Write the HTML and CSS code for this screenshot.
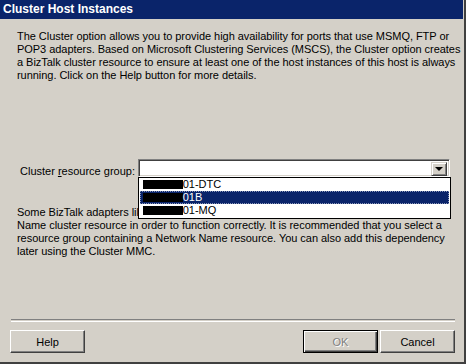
FILE: index.html
```html
<!DOCTYPE html>
<html>
<head>
    <title>Cluster Host Instances</title>
    <link rel="stylesheet" href="styles.css">
</head>
<body>
    <div class="dialog">
        <div class="titlebar">Cluster Host Instances</div>
        <div class="content">
            <p class="intro">
                The Cluster option allows you to provide high availability for ports that use MSMQ, FTP or<br>
                POP3 adapters. Based on Microsoft Clustering Services (MSCS), the Cluster option creates<br>
                a BizTalk cluster resource to ensure at least one of the host instances of this host is always<br>
                running. Click on the Help button for more details.
            </p>
            <div class="group-row">
                <label class="group-label">Cluster <u>r</u>esource group:</label>
                <div class="combo">
                    <div class="combo-button"><span class="arrow"></span></div>
                    <ul class="dropdown">
                        <li><span class="redacted"></span>01-DTC</li>
                        <li class="selected"><span class="redacted"></span>01B</li>
                        <li><span class="redacted"></span>01-MQ</li>
                    </ul>
                </div>
            </div>
            <p class="note">
                Some BizTalk adapters like POP3 require an IP Address and a Network<br>
                Name cluster resource in order to function correctly. It is recommended that you select a<br>
                resource group containing a Network Name resource. You can also add this dependency<br>
                later using the Cluster MMC.
            </p>
        </div>
        <div class="footer">
            <div class="separator"></div>
            <div class="buttons">
                <button class="btn">Help</button>
                <div class="right-buttons">
                    <button class="btn default" disabled>OK</button>
                    <button class="btn">Cancel</button>
                </div>
            </div>
        </div>
    </div>
</body>
</html>
```

FILE: styles.css
```css
body {
    margin: 0;
    background-color: #d4d0c8;
    font-family: 'Liberation Sans', Arial, sans-serif;
    font-size: 11px;
    color: #000;
}

.dialog {
    width: 466px;
    height: 364px;
    box-sizing: border-box;
    background-color: #d4d0c8;
    border-right: 2px solid #404040;
    border-bottom: 2px solid #404040;
    display: flex;
    flex-direction: column;
}

.titlebar {
    height: 19px;
    background-color: #0a246a;
    color: #fff;
    font-weight: bold;
    font-size: 12px;
    line-height: 19px;
    padding-left: 3px;
    margin-right: 1px;
}

.content {
    padding: 11px 14px 0 17px;
}

.intro, .note {
    margin: 0;
    line-height: 13px;
    letter-spacing: -0.04px;
    white-space: nowrap;
}

.group-row {
    display: flex;
    align-items: center;
    margin-top: 77px;
    padding-left: 3px;
}

.group-label {
    width: 118px;
    padding-top: 5px;
}

.combo {
    position: relative;
    width: 313px;
    height: 18px;
    box-sizing: border-box;
    background-color: #fff;
    border-top: 1px solid #808080;
    border-left: 1px solid #808080;
    border-right: 1px solid #fff;
    border-bottom: 1px solid #fff;
    box-shadow: inset 1px 1px #404040, inset -1px -1px #d4d0c8;
    display: flex;
    justify-content: flex-end;
    padding: 2px;
}

.combo-button {
    width: 16px;
    height: 14px;
    box-sizing: border-box;
    background-color: #d4d0c8;
    border-top: 1px solid #d4d0c8;
    border-left: 1px solid #d4d0c8;
    border-right: 1px solid #404040;
    border-bottom: 1px solid #404040;
    box-shadow: inset 1px 1px #fff, inset -1px -1px #808080;
    display: flex;
    align-items: center;
    justify-content: center;
}

.arrow {
    width: 0;
    height: 0;
    border-left: 4px solid transparent;
    border-right: 4px solid transparent;
    border-top: 4px solid #000;
}

.dropdown {
    position: absolute;
    top: 17px;
    left: -1px;
    width: 313px;
    box-sizing: border-box;
    margin: 0;
    padding: 0 1px 1px 1px;
    list-style: none;
    background-color: #fff;
    border: 1px solid #000;
}

.dropdown li {
    height: 13px;
    line-height: 13px;
    display: flex;
    align-items: center;
    padding-left: 3px;
}

.dropdown li.selected {
    background-color: #0a246a;
    color: #fff;
    outline: 1px dotted #8a96b8;
    outline-offset: -1px;
}

.redacted {
    display: inline-block;
    width: 40px;
    height: 9px;
    background-color: #000;
}

.note {
    margin-top: 29px;
}

.footer {
    margin-top: auto;
    padding: 0 9px 9px 10px;
}

.separator {
    height: 1px;
    margin-left: 1px;
    border-top: 1px solid #808080;
    border-bottom: 1px solid #fff;
}

.buttons {
    display: flex;
    justify-content: space-between;
    margin-top: 8px;
}

.right-buttons {
    display: flex;
    gap: 2px;
}

.btn {
    width: 75px;
    height: 23px;
    box-sizing: border-box;
    background-color: #d4d0c8;
    font-family: 'Liberation Sans', Arial, sans-serif;
    font-size: 11px;
    color: #000;
    border-top: 1px solid #fff;
    border-left: 1px solid #fff;
    border-right: 1px solid #404040;
    border-bottom: 1px solid #404040;
    box-shadow: inset -1px -1px #808080, inset 1px 1px #d4d0c8;
    padding: 0;
}

.btn.default {
    border: 1px solid #000;
    box-shadow: inset 1px 1px #fff, inset -1px -1px #404040, inset -2px -2px #808080;
}

.btn:disabled {
    color: #808080;
    text-shadow: 1px 1px #fff;
}
```
